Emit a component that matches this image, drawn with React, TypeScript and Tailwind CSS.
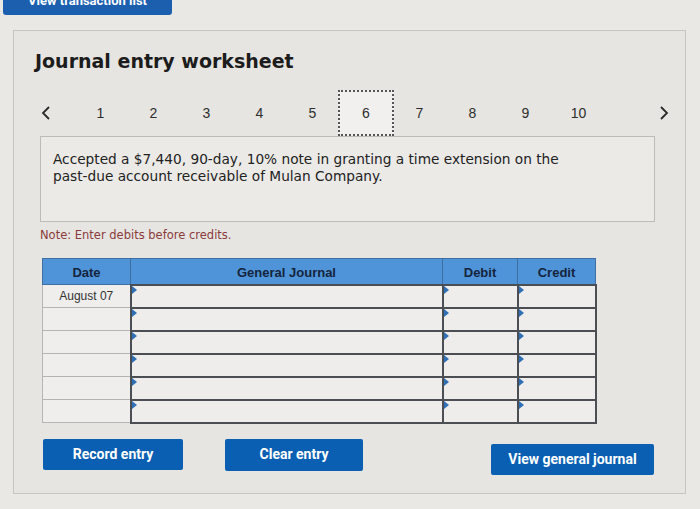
import React from "react";

const pages = [1, 2, 3, 4, 5, 6, 7, 8, 9, 10];
const rows = ["August 07", "", "", "", "", ""];

function Chevron({ dir }: { dir: "left" | "right" }) {
  return (
    <svg width="12" height="16" viewBox="0 0 12 16">
      <polyline
        points={dir === "left" ? "9,2 3,8 9,14" : "3,2 9,8 3,14"}
        fill="none"
        stroke="#2a2a2a"
        strokeWidth="1.8"
      />
    </svg>
  );
}

function Corner() {
  return (
    <span className="absolute left-0 top-0 h-0 w-0 border-t-[4px] border-b-[4px] border-l-[5px] border-t-transparent border-b-transparent border-l-[#2f6fb5]" />
  );
}

export default function App() {
  return (
    <div className="w-[700px] h-[509px] overflow-hidden bg-[#e9e8e4] font-['DejaVu_Sans',sans-serif]">
      <div className="ml-[3px] h-[15px] w-[169px] overflow-hidden rounded-b-[3px] bg-[#1c5faf]">
        <div className="-mt-[8px] text-center text-[13px] leading-[18px] font-bold text-white font-['Roboto',sans-serif]">
          View transaction list
        </div>
      </div>

      <div className="ml-[13px] mt-[15px] h-[464px] w-[673px] border border-[#c6c5c1] bg-[#e6e5e1]">
        <h1 className="pl-[21px] pt-[17px] text-[19px] font-bold leading-[26px] text-[#1c1c1c]">
          Journal entry worksheet
        </h1>

        <div className="mt-[16px] flex h-[46px] items-center font-['Liberation_Sans',sans-serif] text-[14px] text-[#2e2e2e]">
          <div className="ml-[26px] flex w-[34px] items-center">
            <Chevron dir="left" />
          </div>
          <div className="flex">
            {pages.map((p) =>
              p === 6 ? (
                <div
                  key={p}
                  className="mx-[-1px] flex h-[46px] w-[56px] items-center justify-center border-2 border-dotted border-[#555] bg-[#f1f0ee]"
                >
                  {p}
                </div>
              ) : (
                <div key={p} className="flex h-[46px] w-[53px] items-center justify-center">
                  {p}
                </div>
              )
            )}
          </div>
          <div className="ml-[53px] flex items-center">
            <Chevron dir="right" />
          </div>
        </div>

        <div className="ml-[26px] h-[86px] w-[615px] border border-[#bdbcb8] bg-[#ebeae7] px-[12px] pt-[14px] text-[13.7px] leading-[17px] text-[#222]">
          Accepted a $7,440, 90-day, 10% note in granting a time extension on the
          <br />
          past-due account receivable of Mulan Company.
        </div>

        <p className="ml-[26px] mt-[6px] text-[11.5px] leading-[14px] text-[#8a3b3b]">
          Note: Enter debits before credits.
        </p>

        <table className="ml-[28px] mt-[16px] border-collapse font-['Liberation_Sans',sans-serif]">
          <thead>
            <tr className="h-[26px] bg-[#4f94d8] text-[13px] font-bold text-[#15243d]">
              <th className="w-[88px] border border-[#3d6fa3] pt-[2px]">Date</th>
              <th className="w-[312px] border border-[#3d6fa3] pt-[2px]">General Journal</th>
              <th className="w-[75px] border border-[#3d6fa3] pt-[2px]">Debit</th>
              <th className="w-[78px] border border-[#3d6fa3] pt-[2px]">Credit</th>
            </tr>
          </thead>
          <tbody>
            {rows.map((d, i) => (
              <tr key={i} className="h-[23px]">
                <td className="border border-[#b4b4b2] bg-[#efeeec] text-center text-[12px] text-[#333]">
                  {d}
                </td>
                <td className="relative border-2 border-[#4b4e53] bg-[#eeedeb]">
                  <Corner />
                </td>
                <td className="relative border-2 border-[#4b4e53] bg-[#eeedeb]">
                  <Corner />
                </td>
                <td className="relative border-2 border-[#4b4e53] bg-[#eeedeb]">
                  <Corner />
                </td>
              </tr>
            ))}
          </tbody>
        </table>

        <div className="mt-[15px] flex items-start font-['Roboto',sans-serif] text-[14px] font-bold text-white">
          <button className="ml-[29px] h-[31px] w-[140px] rounded-[2px] bg-[#0b5fb3]">Record entry</button>
          <button className="ml-[42px] h-[32px] w-[138px] rounded-[2px] bg-[#0b5fb3]">Clear entry</button>
          <button className="ml-[128px] mt-[5px] h-[31px] w-[163px] rounded-[2px] bg-[#0b5fb3]">
            View general journal
          </button>
        </div>
      </div>
    </div>
  );
}
